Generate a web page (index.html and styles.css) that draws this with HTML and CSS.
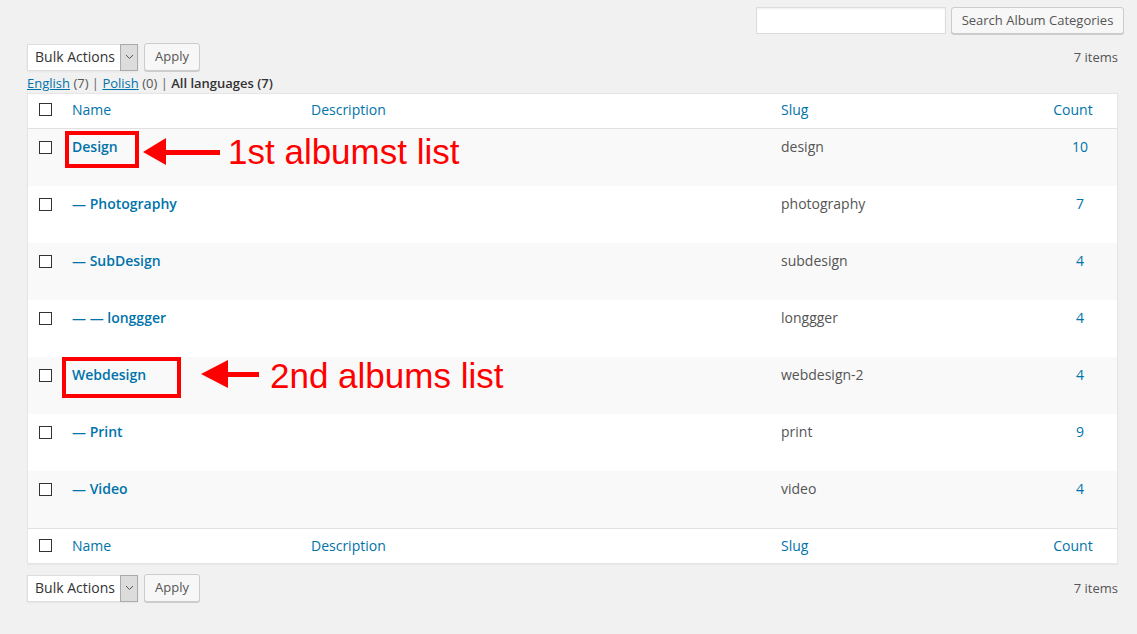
FILE: index.html
```html
<!DOCTYPE html>
<html>
<head>
<meta charset="utf-8">
<link rel="stylesheet" href="styles.css">
</head>
<body>
<div class="wrap">
  <div class="search-row">
    <span class="search-input"></span>
    <span class="button">Search Album Categories</span>
  </div>
  <div class="tablenav">
    <div class="actions">
      <span class="select"><span class="select-label">Bulk Actions</span><span class="select-arrow"><svg width="9" height="6" viewBox="0 0 9 6"><path d="M1 1 L4.5 4.5 L8 1" fill="none" stroke="#555" stroke-width="1"/></svg></span></span>
      <span class="button">Apply</span>
    </div>
    <div class="num">7 items</div>
  </div>
  <div class="subsubsub"><a class="lang">English</a> (7) <span class="sep">|</span> <a class="lang">Polish</a> (0) <span class="sep">|</span> <strong>All languages (7)</strong></div>
  <table class="list">
    <thead>
      <tr>
        <th class="col-cb"><span class="cb"></span></th>
        <th class="col-name"><a>Name</a></th>
        <th class="col-desc"><a>Description</a></th>
        <th class="col-slug"><a>Slug</a></th>
        <th class="col-count"><a class="count-head">Count</a></th>
      </tr>
    </thead>
    <tbody>
      <tr class="alt"><td class="col-cb"><span class="cb"></span></td><td class="col-name"><a class="row-title">Design</a></td><td></td><td class="slug">design</td><td class="col-count"><a>10</a></td></tr>
      <tr><td class="col-cb"><span class="cb"></span></td><td class="col-name"><a class="row-title">— Photography</a></td><td></td><td class="slug">photography</td><td class="col-count"><a>7</a></td></tr>
      <tr class="alt"><td class="col-cb"><span class="cb"></span></td><td class="col-name"><a class="row-title">— SubDesign</a></td><td></td><td class="slug">subdesign</td><td class="col-count"><a>4</a></td></tr>
      <tr><td class="col-cb"><span class="cb"></span></td><td class="col-name"><a class="row-title">— — longgger</a></td><td></td><td class="slug">longgger</td><td class="col-count"><a>4</a></td></tr>
      <tr class="alt"><td class="col-cb"><span class="cb"></span></td><td class="col-name"><a class="row-title">Webdesign</a></td><td></td><td class="slug">webdesign-2</td><td class="col-count"><a>4</a></td></tr>
      <tr><td class="col-cb"><span class="cb"></span></td><td class="col-name"><a class="row-title">— Print</a></td><td></td><td class="slug">print</td><td class="col-count"><a>9</a></td></tr>
      <tr class="alt"><td class="col-cb"><span class="cb"></span></td><td class="col-name"><a class="row-title">— Video</a></td><td></td><td class="slug">video</td><td class="col-count"><a>4</a></td></tr>
    </tbody>
    <tfoot>
      <tr>
        <th class="col-cb"><span class="cb"></span></th>
        <th class="col-name"><a>Name</a></th>
        <th class="col-desc"><a>Description</a></th>
        <th class="col-slug"><a>Slug</a></th>
        <th class="col-count"><a class="count-head">Count</a></th>
      </tr>
    </tfoot>
  </table>
  <div class="tablenav bottom">
    <div class="actions">
      <span class="select"><span class="select-label">Bulk Actions</span><span class="select-arrow"><svg width="9" height="6" viewBox="0 0 9 6"><path d="M1 1 L4.5 4.5 L8 1" fill="none" stroke="#555" stroke-width="1"/></svg></span></span>
      <span class="button">Apply</span>
    </div>
    <div class="num">7 items</div>
  </div>
</div>

<div class="note-box note-box-1"></div>
<svg class="note-arrow note-arrow-1" width="77" height="28" viewBox="0 0 77 28"><polygon points="0,14 23,0 23,27" fill="#f00"/><rect x="22" y="12" width="55" height="5" fill="#f00"/></svg>
<div class="note-text note-text-1">1st albumst list</div>

<div class="note-box note-box-2"></div>
<svg class="note-arrow note-arrow-2" width="58" height="28" viewBox="0 0 58 28"><polygon points="0,14 27,0 27,28" fill="#f00"/><rect x="26" y="12" width="32" height="5" fill="#f00"/></svg>
<div class="note-text note-text-2">2nd albums list</div>
</body>
</html>
```
FILE: styles.css
```css
html, body {
  margin: 0;
  padding: 0;
}
body {
  position: relative;
  background: #f1f1f1;
  font-family: "Open Sans", "Liberation Sans", sans-serif;
  font-size: 13px;
  color: #444;
  width: 1137px;
  height: 634px;
  overflow: hidden;
}
.wrap {
  padding: 7px 20px 0 27px;
}
.search-row {
  display: flex;
  justify-content: flex-end;
  align-items: center;
  gap: 5px;
  margin-right: -7px;
  height: 27px;
}
.search-input {
  display: block;
  width: 188px;
  height: 25px;
  background: #fff;
  border: 1px solid #ddd;
  box-shadow: inset 0 1px 2px rgba(0,0,0,.07);
}
.button {
  display: inline-flex;
  align-items: center;
  box-sizing: border-box;
  height: 27px;
  padding: 0 9px 1px;
  background: #f7f7f7;
  border: 1px solid #ccc;
  border-radius: 3px;
  box-shadow: 0 1px 0 #ccc;
  color: #555;
  font-size: 13px;
  white-space: nowrap;
}
.search-row .button {
  width: 173px;
  justify-content: center;
  padding: 0 0 1px;
}
.tablenav {
  display: flex;
  justify-content: space-between;
  align-items: center;
  height: 28px;
  margin-top: 9px;
}
.actions {
  display: flex;
  align-items: center;
  gap: 6px;
}
.actions .button {
  width: 56px;
  height: 28px;
  justify-content: center;
  padding: 0 0 1px;
  margin-top: -1px;
}
.select {
  display: flex;
  box-sizing: border-box;
  width: 111px;
  height: 27px;
  background: #fff;
  border: 1px solid #ddd;
  box-shadow: 0 1px 2px rgba(0,0,0,.05);
}
.select-label {
  flex: 1;
  padding-left: 7px;
  font-size: 14px;
  line-height: 24px;
  color: #333;
}
.select-arrow {
  display: flex;
  align-items: center;
  justify-content: center;
  width: 16px;
  margin: -1px -1px -1px 0;
  background: #dcdcdc;
  border: 1px solid #aaa;
}
.num {
  color: #555;
  font-size: 13px;
  margin-right: -1px;
}
.subsubsub {
  height: 20px;
  line-height: 20px;
  margin-top: 2px;
  color: #555;
  font-size: 13px;
}
.subsubsub .lang {
  color: #0073aa;
  text-decoration: underline;
}
.subsubsub .sep {
  color: #666;
}
.subsubsub strong {
  color: #333;
  font-weight: 600;
}
.list {
  width: 1090px;
  border-collapse: collapse;
  table-layout: fixed;
  background: #fff;
  border: 1px solid #e5e5e5;
  box-shadow: 0 1px 1px rgba(0,0,0,.04);
  font-size: 14px;
}
.list th, .list td {
  line-height: 21px;
  text-align: left;
  font-weight: normal;
  vertical-align: top;
}
.list thead th {
  padding: 5px 10px 8px;
  border-bottom: 1px solid #e1e1e1;
}
.list tfoot th {
  padding: 6px 10px 7px;
  border-top: 1px solid #e1e1e1;
}
.list td {
  padding: 7px 10px 9px;
  height: 41px;
  color: #555;
}
.list a {
  color: #0073aa;
  text-decoration: none;
}
.list tr.alt td {
  background: #f9f9f9;
}
.col-cb {
  width: 13px;
}
.list thead th.col-cb {
  padding: 9px 10px 0 11px;
}
.list tfoot th.col-cb {
  padding: 10px 10px 0 11px;
}
.list td.col-cb {
  padding: 12px 10px 0 11px;
}
.col-name { width: 219px; }
.col-desc { width: 450px; }
.col-slug { width: 252px; }
.col-count { width: 54px; }
.list th.col-count, .list td.col-count {
  text-align: center;
}
.count-head {
  display: inline-block;
  padding-right: 14px;
}
.cb {
  display: block;
  width: 11px;
  height: 11px;
  border: 1px solid #333;
  background: #fff;
}
.row-title {
  font-weight: 600;
}
.list td.slug {
  color: #555;
}
.tablenav.bottom {
  margin-top: 10px;
}

/* annotations drawn over the screenshot */
.note-box {
  position: absolute;
  box-sizing: border-box;
  border: 4px solid #f00;
}
.note-box-1 {
  left: 65px;
  top: 131px;
  width: 74px;
  height: 37px;
}
.note-box-2 {
  left: 62px;
  top: 357px;
  width: 119px;
  height: 41px;
}
.note-arrow {
  position: absolute;
}
.note-arrow-1 {
  left: 143px;
  top: 138px;
}
.note-arrow-2 {
  left: 201px;
  top: 360px;
}
.note-text {
  position: absolute;
  font-family: "Liberation Sans", Arial, sans-serif;
  font-size: 35px;
  line-height: 1;
  color: #f00;
  white-space: nowrap;
}
.note-text-1 {
  left: 228px;
  top: 134px;
}
.note-text-2 {
  left: 270px;
  top: 358px;
}
```
